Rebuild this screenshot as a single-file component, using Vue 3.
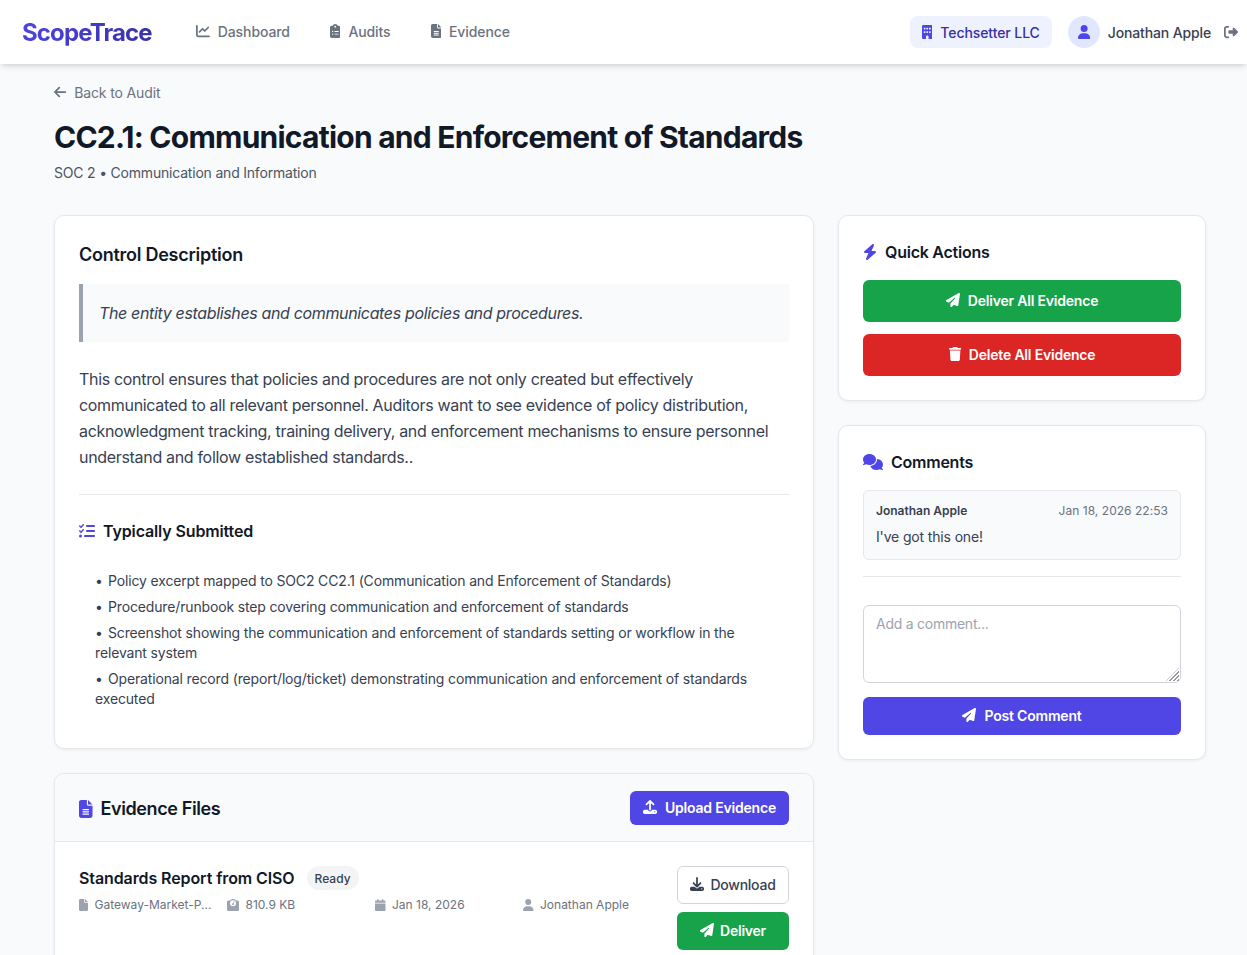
<script setup>
import { h } from "vue";

const paths = {
  chart: [512, "M64 64c0-17.7-14.3-32-32-32S0 46.3 0 64V400c0 44.2 35.8 80 80 80H480c17.7 0 32-14.3 32-32s-14.3-32-32-32H80c-8.8 0-16-7.2-16-16V64zm406.6 86.6c12.5-12.5 12.5-32.8 0-45.3s-32.8-12.5-45.3 0L320 210.7l-57.4-57.4c-12.5-12.5-32.8-12.5-45.3 0l-112 112c-12.5 12.5-12.5 32.8 0 45.3s32.8 12.5 45.3 0L240 221.3l57.4 57.4c12.5 12.5 32.8 12.5 45.3 0l128-128z"],
  clipboard: [384, "M192 0c-41.8 0-77.4 26.7-90.5 64H64C28.7 64 0 92.7 0 128V448c0 35.3 28.7 64 64 64H320c35.3 0 64-28.7 64-64V128c0-35.3-28.7-64-64-64H282.5C269.4 26.7 233.8 0 192 0zm0 64a32 32 0 1 1 0 64 32 32 0 1 1 0-64zM72 272a24 24 0 1 1 48 0 24 24 0 1 1 -48 0zm104-16H304c8.8 0 16 7.2 16 16s-7.2 16-16 16H176c-8.8 0-16-7.2-16-16s7.2-16 16-16zM72 368a24 24 0 1 1 48 0 24 24 0 1 1 -48 0zm88 0c0-8.8 7.2-16 16-16H304c8.8 0 16 7.2 16 16s-7.2 16-16 16H176c-8.8 0-16-7.2-16-16z"],
  fileLines: [384, "M64 0C28.7 0 0 28.7 0 64V448c0 35.3 28.7 64 64 64H320c35.3 0 64-28.7 64-64V160H256c-17.7 0-32-14.3-32-32V0H64zM256 0V128H384L256 0zM112 256H272c8.8 0 16 7.2 16 16s-7.2 16-16 16H112c-8.8 0-16-7.2-16-16s7.2-16 16-16zm0 64H272c8.8 0 16 7.2 16 16s-7.2 16-16 16H112c-8.8 0-16-7.2-16-16s7.2-16 16-16zm0 64H272c8.8 0 16 7.2 16 16s-7.2 16-16 16H112c-8.8 0-16-7.2-16-16s7.2-16 16-16z"],
  file: [384, "M0 64C0 28.7 28.7 0 64 0H224V128c0 17.7 14.3 32 32 32H384V448c0 35.3-28.7 64-64 64H64c-35.3 0-64-28.7-64-64V64zm384 64H256V0L384 128z"],
  building: [384, "M48 0C21.5 0 0 21.5 0 48V464c0 26.5 21.5 48 48 48h96V432c0-26.5 21.5-48 48-48s48 21.5 48 48v80h96c26.5 0 48-21.5 48-48V48c0-26.5-21.5-48-48-48H48zM64 240c0-8.8 7.2-16 16-16h32c8.8 0 16 7.2 16 16v32c0 8.8-7.2 16-16 16H80c-8.8 0-16-7.2-16-16V240zm112-16h32c8.8 0 16 7.2 16 16v32c0 8.8-7.2 16-16 16H176c-8.8 0-16-7.2-16-16V240c0-8.8 7.2-16 16-16zm80 16c0-8.8 7.2-16 16-16h32c8.8 0 16 7.2 16 16v32c0 8.8-7.2 16-16 16H272c-8.8 0-16-7.2-16-16V240zM80 96h32c8.8 0 16 7.2 16 16v32c0 8.8-7.2 16-16 16H80c-8.8 0-16-7.2-16-16V112c0-8.8 7.2-16 16-16zm80 16c0-8.8 7.2-16 16-16h32c8.8 0 16 7.2 16 16v32c0 8.8-7.2 16-16 16H176c-8.8 0-16-7.2-16-16V112zM272 96h32c8.8 0 16 7.2 16 16v32c0 8.8-7.2 16-16 16H272c-8.8 0-16-7.2-16-16V112c0-8.8 7.2-16 16-16z"],
  user: [448, "M224 256A128 128 0 1 0 224 0a128 128 0 1 0 0 256zm-45.7 48C79.8 304 0 383.8 0 482.3C0 498.7 13.3 512 29.7 512H418.3c16.4 0 29.7-13.3 29.7-29.7C448 383.8 368.2 304 269.7 304H178.3z"],
  logout: [512, "M377.9 105.9L500.7 228.7c7.2 7.2 11.3 17.1 11.3 27.3s-4.1 20.1-11.3 27.3L377.9 406.1c-6.4 6.4-15 9.9-24 9.9c-18.7 0-33.9-15.2-33.9-33.9l0-62.1-128 0c-17.7 0-32-14.3-32-32l0-64c0-17.7 14.3-32 32-32l128 0 0-62.1c0-18.7 15.2-33.9 33.9-33.9c9 0 17.6 3.6 24 9.9zM160 96L96 96c-17.7 0-32 14.3-32 32l0 256c0 17.7 14.3 32 32 32l64 0c17.7 0 32 14.3 32 32s-14.3 32-32 32l-64 0c-53 0-96-43-96-96L0 128C0 75 43 32 96 32l64 0c17.7 0 32 14.3 32 32s-14.3 32-32 32z"],
  arrowLeft: [448, "M9.4 233.4c-12.5 12.5-12.5 32.8 0 45.3l160 160c12.5 12.5 32.8 12.5 45.3 0s12.5-32.8 0-45.3L109.2 288 416 288c17.7 0 32-14.3 32-32s-14.3-32-32-32l-306.7 0L214.6 118.6c12.5-12.5 12.5-32.8 0-45.3s-32.8-12.5-45.3 0l-160 160z"],
  listCheck: [512, "M152.1 38.2c9.9 8.9 10.7 24 1.8 33.9l-72 80c-4.4 4.9-10.6 7.8-17.2 7.9s-12.9-2.4-17.6-7L7 113C-2.3 103.6-2.3 88.4 7 79s24.6-9.4 33.9 0l22.1 22.1 55.1-61.2c8.9-9.9 24-10.7 33.9-1.8zm0 160c9.9 8.9 10.7 24 1.8 33.9l-72 80c-4.4 4.9-10.6 7.8-17.2 7.9s-12.9-2.4-17.6-7L7 273c-9.4-9.4-9.4-24.6 0-33.9s24.6-9.4 33.9 0l22.1 22.1 55.1-61.2c8.9-9.9 24-10.7 33.9-1.8zM224 96c0-17.7 14.3-32 32-32H480c17.7 0 32 14.3 32 32s-14.3 32-32 32H256c-17.7 0-32-14.3-32-32zm0 160c0-17.7 14.3-32 32-32H480c17.7 0 32 14.3 32 32s-14.3 32-32 32H256c-17.7 0-32-14.3-32-32zM160 416c0-17.7 14.3-32 32-32H480c17.7 0 32 14.3 32 32s-14.3 32-32 32H192c-17.7 0-32-14.3-32-32zM48 368a48 48 0 1 1 0 96 48 48 0 1 1 0-96z"],
  bolt: [448, "M349.4 44.6c5.9-13.7 1.5-29.7-10.6-38.5s-28.6-8-39.9 1.8l-256 224c-10 8.8-13.6 22.9-8.9 35.3S50.7 288 64 288H175.5L98.6 467.4c-5.9 13.7-1.5 29.7 10.6 38.5s28.6 8 39.9-1.8l256-224c10-8.8 13.6-22.9 8.9-35.3s-18-20.6-31.3-20.6H272.5L349.4 44.6z"],
  plane: [512, "M498.1 5.6c10.1 7 15.4 19.1 13.5 31.2l-64 416c-1.5 9.7-7.4 18.2-16 23s-18.9 5.4-28 1.6L284 427.7l-68.5 74.1c-8.9 9.7-22.9 12.9-35.2 8.1S160 493.2 160 480V396.4c0-4 1.5-7.8 4.2-10.7L331.8 202.8c5.8-6.3 5.6-16-.4-22s-15.7-6.4-22-.7L106 360.8 17.7 316.6C7.1 311.3 .3 300.7 0 288.9s5.9-22.8 16.1-28.7l448-256c10.7-6.1 23.9-5.5 34 1.4z"],
  trash: [448, "M135.2 17.7L128 32H32C14.3 32 0 46.3 0 64S14.3 96 32 96H416c17.7 0 32-14.3 32-32s-14.3-32-32-32H320l-7.2-14.3C307.4 6.8 296.3 0 284.2 0H163.8c-12.1 0-23.2 6.8-28.6 17.7zM416 128H32L53.2 467c1.6 25.3 22.6 45 47.9 45H346.9c25.3 0 46.3-19.7 47.9-45L416 128z"],
  comments: [640, "M208 352c114.9 0 208-78.8 208-176S322.9 0 208 0S0 78.8 0 176c0 38.6 14.7 74.3 39.6 103.4c-3.5 9.4-8.7 17.7-14.2 24.7c-4.8 6.2-9.7 11-13.3 14.3c-1.8 1.6-3.3 2.9-4.3 3.7c-.5 .4-.9 .7-1.1 .8l-.2 .2 0 0 0 0C1 327.2-1.4 334.4 .8 340.9S9.1 352 16 352c21.8 0 43.8-5.6 62.1-12.5c9.2-3.5 17.8-7.4 25.3-11.4C134.1 343.3 169.8 352 208 352zM448 176c0 112.3-99.1 196.9-216.5 207C255.8 457.4 336.4 512 432 512c38.2 0 73.9-8.7 104.7-23.9c7.5 4 16 7.9 25.2 11.4c18.3 6.9 40.3 12.5 62.1 12.5c6.9 0 13.1-4.5 15.2-11.1c2.1-6.6-.2-13.8-5.8-17.9l0 0 0 0-.2-.2c-.2-.2-.6-.4-1.1-.8c-1-.8-2.5-2-4.3-3.7c-3.6-3.3-8.5-8.1-13.3-14.3c-5.5-7-10.7-15.4-14.2-24.7c24.9-29 39.6-64.7 39.6-103.4c0-92.8-84.9-168.9-192.6-175.5c.4 5.1 .6 10.3 .6 15.5z"],
  upload: [512, "M288 109.3V352c0 17.7-14.3 32-32 32s-32-14.3-32-32V109.3l-73.4 73.4c-12.5 12.5-32.8 12.5-45.3 0s-12.5-32.8 0-45.3l128-128c12.5-12.5 32.8-12.5 45.3 0l128 128c12.5 12.5 12.5 32.8 0 45.3s-32.8 12.5-45.3 0L288 109.3zM64 352H192c0 35.3 28.7 64 64 64s64-28.7 64-64H448c35.3 0 64 28.7 64 64v32c0 35.3-28.7 64-64 64H64c-35.3 0-64-28.7-64-64V416c0-35.3 28.7-64 64-64zM432 456a24 24 0 1 0 0-48 24 24 0 1 0 0 48z"],
  download: [512, "M288 32c0-17.7-14.3-32-32-32s-32 14.3-32 32V274.7l-73.4-73.4c-12.5-12.5-32.8-12.5-45.3 0s-12.5 32.8 0 45.3l128 128c12.5 12.5 32.8 12.5 45.3 0l128-128c12.5-12.5 12.5-32.8 0-45.3s-32.8-12.5-45.3 0L288 274.7V32zM64 352c-35.3 0-64 28.7-64 64v32c0 35.3 28.7 64 64 64H448c35.3 0 64-28.7 64-64V416c0-35.3-28.7-64-64-64H346.5l-45.3 45.3c-25 25-65.5 25-90.5 0L165.5 352H64zm368 56a24 24 0 1 1 0 48 24 24 0 1 1 0-48z"],
  scale: [512, "M128 176a128 128 0 1 1 256 0 128 128 0 1 1 -256 0zM391.8 64C359.5 24.9 310.7 0 256 0S152.5 24.9 120.2 64H64C28.7 64 0 92.7 0 128V448c0 35.3 28.7 64 64 64H448c35.3 0 64-28.7 64-64V128c0-35.3-28.7-64-64-64H391.8zM296 224c0-10.6-4.1-20.2-10.9-27.4l33.6-78.3c3.5-8.1-.3-17.5-8.4-21s-17.5 .3-21 8.4L255.7 184c-22 .1-39.7 18-39.7 40c0 22.1 17.9 40 40 40s40-17.9 40-40z"],
  calendar: [448, "M96 32V64H48C21.5 64 0 85.5 0 112v48H448V112c0-26.5-21.5-48-48-48H352V32c0-17.7-14.3-32-32-32s-32 14.3-32 32V64H160V32c0-17.7-14.3-32-32-32S96 14.3 96 32zM448 192H0V464c0 26.5 21.5 48 48 48H400c26.5 0 48-21.5 48-48V192z"],
};

// renders a solid icon, width follows the icon's own box
const Icon = (props) => {
  const [w, d] = paths[props.name];
  return h("svg", { viewBox: `0 0 ${w} 512`, fill: "currentColor", "aria-hidden": "true", style: { aspectRatio: `${w} / 512` } }, [h("path", { d })]);
};
Icon.props = ["name"];

const navLinks = [
  { label: "Dashboard", icon: "chart" },
  { label: "Audits", icon: "clipboard" },
  { label: "Evidence", icon: "fileLines" },
];

const submitted = [
  "Policy excerpt mapped to SOC2 CC2.1 (Communication and Enforcement of Standards)",
  "Procedure/runbook step covering communication and enforcement of standards",
  "Screenshot showing the communication and enforcement of standards setting or workflow in the relevant system",
  "Operational record (report/log/ticket) demonstrating communication and enforcement of standards executed",
];

const fileMeta = [
  { icon: "file", text: "Gateway-Market-P..." },
  { icon: "scale", text: "810.9 KB" },
  { icon: "calendar", text: "Jan 18, 2026" },
  { icon: "user", text: "Jonathan Apple" },
];
</script>

<template>
  <div class="app">
    <header class="nav">
      <div class="nav-left">
        <span class="logo">ScopeTrace</span>
        <nav class="nav-links">
          <a v-for="link in navLinks" :key="link.label" class="nav-link" href="#">
            <Icon :name="link.icon" class="nav-ic" />
            {{ link.label }}
          </a>
        </nav>
      </div>
      <div class="nav-right">
        <div class="org"><Icon name="building" class="org-ic" />Techsetter LLC</div>
        <div class="avatar"><Icon name="user" class="avatar-ic" /></div>
        <span class="user-name">Jonathan Apple</span>
        <Icon name="logout" class="logout-ic" />
      </div>
    </header>

    <main class="page">
      <a class="back" href="#"><Icon name="arrowLeft" class="back-ic" />Back to Audit</a>
      <h1 class="title">CC2.1: Communication and Enforcement of Standards</h1>
      <p class="subtitle">SOC 2 • Communication and Information</p>

      <div class="layout">
        <div class="col-main">
          <section class="card desc-card">
            <h2 class="card-title">Control Description</h2>
            <blockquote class="quote">The entity establishes and communicates policies and procedures.</blockquote>
            <p class="body-text">
              This control ensures that policies and procedures are not only created but effectively communicated to all relevant personnel. Auditors want to see evidence of policy distribution, acknowledgment tracking, training delivery, and enforcement mechanisms to ensure personnel understand and follow established standards..
            </p>
            <div class="submitted">
              <h3 class="sub-title"><Icon name="listCheck" class="sub-ic" />Typically Submitted</h3>
              <ul class="sub-list">
                <li v-for="item in submitted" :key="item">{{ item }}</li>
              </ul>
            </div>
          </section>

          <section class="card files-card">
            <div class="files-head">
              <h2 class="files-title"><Icon name="fileLines" class="files-ic" />Evidence Files</h2>
              <button class="btn btn-indigo btn-upload"><Icon name="upload" class="btn-ic" />Upload Evidence</button>
            </div>
            <div class="file-row">
              <div class="file-info">
                <div class="file-name-row">
                  <span class="file-name">Standards Report from CISO</span>
                  <span class="badge">Ready</span>
                </div>
                <div class="file-meta">
                  <span v-for="m in fileMeta" :key="m.icon" class="meta-item">
                    <Icon :name="m.icon" class="meta-ic" />
                    <span class="meta-text">{{ m.text }}</span>
                  </span>
                </div>
              </div>
              <div class="file-actions">
                <button class="btn btn-outline btn-file"><Icon name="download" class="btn-ic" />Download</button>
                <button class="btn btn-green btn-file"><Icon name="plane" class="btn-ic" />Deliver</button>
              </div>
            </div>
          </section>
        </div>

        <aside class="col-side">
          <section class="card side-card">
            <h3 class="side-title"><Icon name="bolt" class="side-ic bolt" />Quick Actions</h3>
            <button class="btn btn-green btn-wide"><Icon name="plane" class="btn-ic" />Deliver All Evidence</button>
            <button class="btn btn-red btn-wide"><Icon name="trash" class="btn-ic" />Delete All Evidence</button>
          </section>

          <section class="card side-card">
            <h3 class="side-title"><Icon name="comments" class="side-ic chat" />Comments</h3>
            <div class="comment">
              <div class="comment-top">
                <span class="comment-author">Jonathan Apple</span>
                <span class="comment-date">Jan 18, 2026 22:53</span>
              </div>
              <p class="comment-text">I've got this one!</p>
            </div>
            <div class="comment-form">
              <div class="input-wrap">
                <textarea class="comment-input" placeholder="Add a comment..."></textarea>
              </div>
              <button class="btn btn-indigo btn-post"><Icon name="plane" class="btn-ic" />Post Comment</button>
            </div>
          </section>
        </aside>
      </div>
    </main>
  </div>
</template>

<style>
html,
body {
  margin: 0;
  overflow: hidden;
}
</style>

<style scoped>
.app {
  height: 100vh;
  overflow: hidden;
  background: #f9fafb;
  font-family: Inter, "Liberation Sans", sans-serif;
  color: #111827;
}

/* top bar */
.nav {
  position: relative;
  height: 64px;
  padding: 0 9px 0 22px;
  display: flex;
  align-items: center;
  justify-content: space-between;
  background: #fff;
  box-shadow: 0 4px 6px -1px rgba(0, 0, 0, 0.1), 0 2px 4px -2px rgba(0, 0, 0, 0.1);
}
.nav-left {
  display: flex;
  align-items: center;
  gap: 44px;
}
.logo {
  font-size: 24px;
  font-weight: 700;
  letter-spacing: -0.88px;
  background: linear-gradient(135deg, #4f46e5, #3730a3);
  -webkit-background-clip: text;
  background-clip: text;
  color: transparent;
}
.nav-links {
  display: flex;
  gap: 40px;
  padding-bottom: 2px;
}
.nav-link {
  display: flex;
  align-items: center;
  gap: 8px;
  font-size: 14px;
  font-weight: 500;
  letter-spacing: -0.1px;
  color: #6b7280;
  text-decoration: none;
}
.nav-ic {
  height: 14px;
}
.nav-right {
  display: flex;
  align-items: center;
}
.org {
  display: flex;
  align-items: center;
  gap: 8px;
  height: 32px;
  padding: 0 12px;
  border-radius: 8px;
  background: #eef2ff;
  color: #3730a3;
  font-size: 14px;
  font-weight: 500;
  letter-spacing: -0.08px;
}
.org-ic {
  height: 14px;
  color: #4f46e5;
}
.avatar {
  width: 32px;
  height: 32px;
  margin-left: 16px;
  border-radius: 50%;
  background: #e0e7ff;
  color: #4f46e5;
  display: flex;
  align-items: center;
  justify-content: center;
}
.avatar-ic {
  height: 14px;
}
.user-name {
  margin-left: 8px;
  font-size: 14px;
  font-weight: 500;
  letter-spacing: -0.14px;
  color: #374151;
}
.logout-ic {
  height: 14px;
  margin-left: 13px;
  color: #6b7280;
}

/* page head */
.page {
  padding: 19px 41px 0 54px;
}
.back {
  display: flex;
  align-items: center;
  gap: 8px;
  height: 18px;
  font-size: 14px;
  letter-spacing: -0.14px;
  color: #6b7280;
  text-decoration: none;
}
.back-ic {
  height: 14px;
}
.title {
  margin: 17px 0 0;
  font-size: 30px;
  line-height: 38px;
  font-weight: 700;
  letter-spacing: -0.76px;
  color: #111827;
}
.subtitle {
  margin: 7px 0 0;
  font-size: 14px;
  line-height: 20px;
  letter-spacing: -0.2px;
  color: #4b5563;
}
.layout {
  margin-top: 32px;
  display: grid;
  grid-template-columns: 760px 368px;
  gap: 24px;
  align-items: start;
}
.col-main,
.col-side {
  display: flex;
  flex-direction: column;
  gap: 24px;
}
.card {
  background: #fff;
  border: 1px solid #e5e7eb;
  border-radius: 10px;
  box-shadow: 0 1px 3px rgba(0, 0, 0, 0.06);
}

/* control description */
.desc-card {
  padding: 25px 24px 24px;
}
.card-title {
  margin: 0;
  font-size: 18px;
  line-height: 28px;
  font-weight: 600;
  letter-spacing: -0.26px;
}
.quote {
  margin: 15px 0 0;
  padding: 16px;
  border-left: 4px solid #9ca3af;
  background: #f9fafb;
  font-size: 16px;
  line-height: 26px;
  font-style: italic;
  color: #374151;
  letter-spacing: -0.35px;
}
.body-text {
  margin: 24px 0 0;
  font-size: 16px;
  line-height: 26px;
  color: #374151;
  letter-spacing: -0.32px;
}
.submitted {
  margin-top: 24px;
  padding-top: 24px;
  border-top: 1px solid #e5e7eb;
}
.sub-title {
  margin: 0;
  display: flex;
  align-items: center;
  gap: 8px;
  font-size: 16px;
  line-height: 24px;
  font-weight: 600;
  letter-spacing: -0.13px;
}
.sub-ic {
  height: 16px;
  color: #4f46e5;
}
.sub-list {
  margin: 28px 0 15px;
  padding: 0 0 0 16px;
  list-style: none;
  font-size: 14px;
  line-height: 20px;
  color: #374151;
}
.sub-list li {
  margin-top: 6px;
  letter-spacing: -0.15px;
}
.sub-list li::before {
  content: "•";
  display: inline-block;
  width: 13px;
}

/* evidence files */
.files-card {
  overflow: hidden;
}
.files-head {
  height: 66px;
  padding: 1px 24px 0;
  display: flex;
  align-items: center;
  justify-content: space-between;
  background: #f9fafb;
  border-bottom: 1px solid #e5e7eb;
}
.files-title {
  margin: 0;
  padding-top: 1px;
  display: flex;
  align-items: center;
  gap: 8px;
  font-size: 18px;
  font-weight: 600;
  letter-spacing: -0.39px;
}
.files-ic {
  height: 18px;
  color: #4f46e5;
}
.btn {
  display: flex;
  align-items: center;
  justify-content: center;
  gap: 8px;
  padding: 0 0 2px;
  border: 0;
  border-radius: 6px;
  font-family: inherit;
  font-size: 14px;
  font-weight: 600;
  letter-spacing: -0.2px;
  color: #fff;
}
.btn-ic {
  height: 14px;
}
.btn-indigo {
  background: #4f46e5;
}
.btn-green {
  background: #16a34a;
}
.btn-red {
  background: #dc2626;
}
.btn-outline {
  background: #fff;
  border: 1px solid #d1d5db;
  color: #374151;
  font-weight: 500;
}
.btn-upload {
  width: 159px;
  height: 34px;
}
.file-row {
  padding: 24px;
  display: flex;
  gap: 24px;
}
.file-info {
  flex: 1;
  min-width: 0;
}
.file-name-row {
  display: flex;
  align-items: center;
  gap: 12px;
  height: 24px;
}
.file-name {
  font-size: 16px;
  font-weight: 600;
  letter-spacing: -0.1px;
}
.badge {
  height: 24px;
  padding: 0 8px;
  display: flex;
  align-items: center;
  border-radius: 12px;
  background: #f3f4f6;
  color: #374151;
  font-size: 12px;
  font-weight: 500;
}
.file-meta {
  margin-top: 6px;
  display: grid;
  grid-template-columns: repeat(4, 132px);
  gap: 16px;
  font-size: 12px;
  line-height: 18px;
  color: #6b7280;
}
.meta-item {
  display: flex;
  align-items: center;
  gap: 6.5px;
  min-width: 0;
}
.meta-ic {
  height: 12px;
  flex: none;
  color: #9ca3af;
}
.meta-text {
  white-space: nowrap;
}
.file-actions {
  width: 112px;
  flex: none;
  display: flex;
  flex-direction: column;
  gap: 8px;
}
.btn-file {
  height: 38px;
  gap: 6px;
  letter-spacing: -0.25px;
}

/* sidebar */
.side-card {
  padding: 25px 24px 24px;
}
.side-title {
  margin: 0 0 17px;
  display: flex;
  align-items: center;
  gap: 8px;
  height: 22px;
  font-size: 16px;
  line-height: 22px;
  font-weight: 600;
  letter-spacing: -0.24px;
}
.side-ic {
  height: 16px;
  color: #4f46e5;
}
.btn-wide {
  width: 100%;
  height: 42px;
}
.btn-wide + .btn-wide {
  margin-top: 12px;
}
.comment {
  padding: 11px 12px 12px;
  border: 1px solid #e5e7eb;
  border-radius: 6px;
  background: #f9fafb;
}
.comment-top {
  display: flex;
  justify-content: space-between;
  align-items: center;
  height: 16px;
}
.comment-author {
  font-size: 12px;
  font-weight: 600;
  color: #374151;
}
.comment-date {
  font-size: 12px;
  letter-spacing: 0.04px;
  color: #6b7280;
}
.comment-text {
  margin: 9px 0 0;
  font-size: 14px;
  line-height: 20px;
  letter-spacing: -0.15px;
  color: #374151;
}
.comment-form {
  margin-top: 16px;
  padding-top: 28px;
  border-top: 1px solid #e5e7eb;
}
.input-wrap {
  position: relative;
}
.input-wrap::after {
  content: "";
  position: absolute;
  right: 2px;
  bottom: 2px;
  width: 13px;
  height: 13px;
  pointer-events: none;
  clip-path: polygon(100% 0, 100% 100%, 0 100%);
  background: repeating-linear-gradient(135deg, #9a9a9a 0 1px, #fff 1px 2.8px);
}
.comment-input {
  display: block;
  box-sizing: border-box;
  width: 100%;
  height: 78px;
  padding: 9px 12px;
  border: 1px solid #d1d5db;
  border-radius: 6px;
  outline: none;
  resize: none;
  font-family: inherit;
  font-size: 14px;
  line-height: 18px;
  letter-spacing: -0.25px;
  color: #374151;
}
.comment-input::placeholder {
  color: #9ca3af;
}
.btn-post {
  margin-top: 14px;
  width: 100%;
  height: 38px;
}
</style>
